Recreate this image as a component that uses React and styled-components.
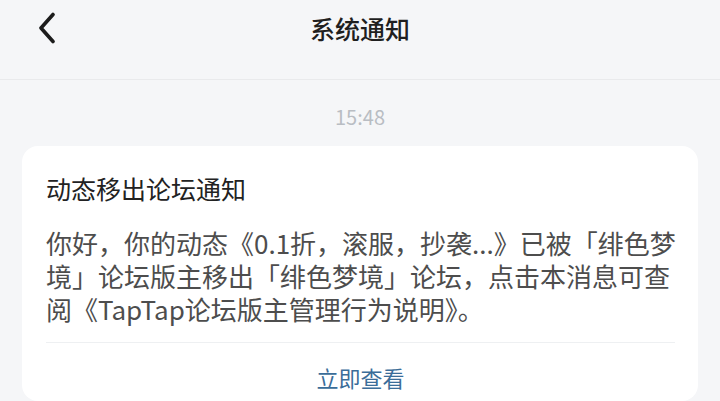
import React from 'react';
import styled, { createGlobalStyle } from 'styled-components';

const Global = createGlobalStyle`
    html, body {
        margin: 0;
        padding: 0;
        background: #f5f6f8;
        font-family: "Noto Sans CJK SC", "Noto Sans", sans-serif;
    }
`

const Page = styled.div`
    width: 720px;
    height: 401px;
    overflow: hidden;
    background: #f5f6f8;
    display: flex;
    flex-direction: column;
`

const Header = styled.header`
    height: 79px;
    flex-shrink: 0;
    border-bottom: 1px solid #e9eaec;
    display: flex;
    align-items: center;
    justify-content: center;
    position: relative;
`

const BackButton = styled.button`
    position: absolute;
    left: 30px;
    top: 8px;
    width: 34px;
    height: 40px;
    padding: 0;
    border: 0;
    background: transparent;
    display: flex;
    align-items: center;
    justify-content: center;
    cursor: pointer;
`

const Title = styled.h1`
    margin: 0 0 24px;
    font-size: 25px;
    font-weight: 500;
    color: #1f1f1f;
    line-height: 34px;
`

const Time = styled.div`
    margin-top: 26px;
    text-align: center;
    font-size: 20px;
    line-height: 22px;
    color: #b9bdc3;
`

const Card = styled.section`
    margin: 18px 22px 0;
    background: #fff;
    border-radius: 16px;
    padding: 25px 23px 0 24px;
    flex: 1;
`

const CardTitle = styled.h2`
    margin: 0;
    font-size: 25px;
    font-weight: 400;
    line-height: 34px;
    color: #222;
`

const Body = styled.p`
    margin: 21px 0 0;
    font-size: 26px;
    line-height: 33px;
    color: #4d4d4d;
    white-space: nowrap;
`

const Footer = styled.div`
    margin-top: 17px;
    border-top: 1px solid #eef0f2;
    padding-top: 21px;
    text-align: center;
`

const Action = styled.a`
    font-size: 22px;
    line-height: 26px;
    color: #3b6d99;
    text-decoration: none;
`

export default function App() {
    return (
        <Page>
            <Global />
            <Header>
                <BackButton aria-label="返回">
                    <svg width="20" height="32" viewBox="0 0 20 32" fill="none">
                        <path d="M16 2.5 L4 16 L16 29.5" stroke="#1c1c1c" strokeWidth="3.6" strokeLinecap="round" strokeLinejoin="round" />
                    </svg>
                </BackButton>
                <Title>系统通知</Title>
            </Header>
            <Time>15:48</Time>
            <Card>
                <CardTitle>动态移出论坛通知</CardTitle>
                <Body>
                    你好，你的动态《0.1折，滚服，抄袭...》已被「绯色梦<br />
                    境」论坛版主移出「绯色梦境」论坛，点击本消息可查<br />
                    阅《TapTap论坛版主管理行为说明》。
                </Body>
                <Footer>
                    <Action href="#">立即查看</Action>
                </Footer>
            </Card>
        </Page>
    )
}
